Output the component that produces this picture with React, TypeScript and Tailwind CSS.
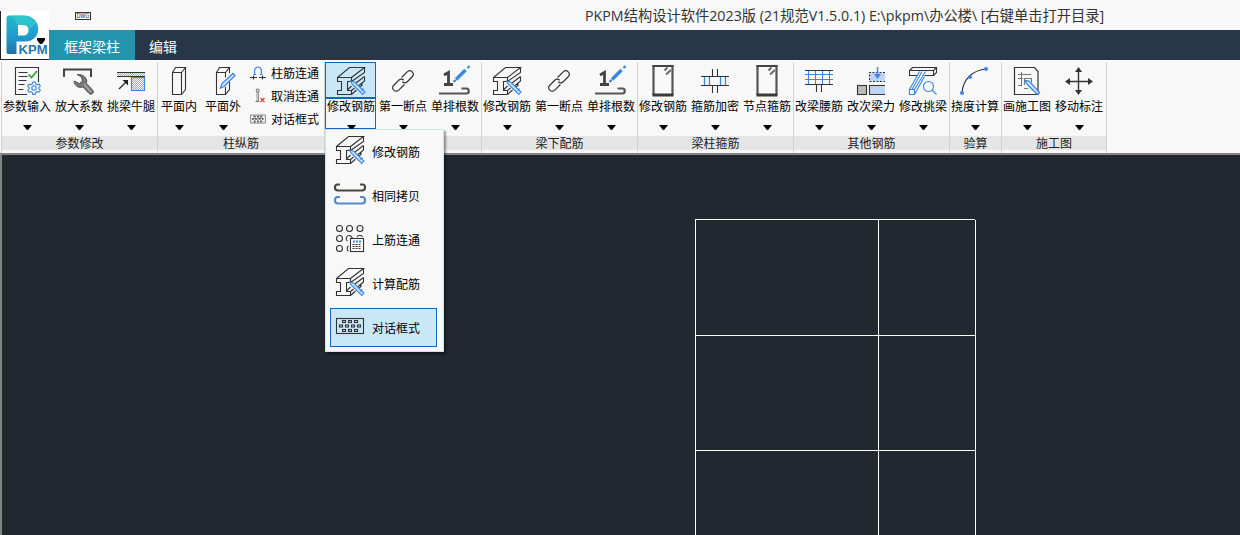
import React from "react";

type P = { className?: string };
type IconC = (p: P) => React.ReactElement;

const D = "#333";
const B = "#3a86e0";

const I = ({ children, className = "w-8 h-8", vb = "0 0 32 32" }: { children: React.ReactNode; className?: string; vb?: string }) => (
  <svg viewBox={vb} className={className + " shrink-0 block overflow-visible"} fill="none" stroke={D} strokeWidth="1.1">
    {children}
  </svg>
);

const ParamInput: IconC = () => (
  <I>
    <path d="M16 30.5H4.500V3.500h23V18M7.500 8.500h9M7.500 12.500h9M7.500 16.500h8M7.500 20.500h6M7.500 25.500h5" />
    <path d="M17.500 10.500l3 3 5.500-6.500" stroke="#2fa52f" strokeWidth="1.700" />
    <g stroke={B} transform="translate(1 0)">
      <circle cx="22" cy="24" r="2.200" />
      <path d="M20.800 18h2.400l.5 2 1.400.8 2-.6 1.200 2-1.500 1.500v1l1.500 1.500-1.200 2-2-.6-1.400.8-.5 2h-2.400l-.5-2-1.400-.8-2 .6-1.200-2 1.500-1.500v-1l-1.500-1.500 1.200-2 2 .6 1.400-.8z" />
    </g>
  </I>
);
const Wrench: IconC = () => (
  <I>
    <path d="M1 13V5.500h27V13" stroke="#444" strokeWidth="2" />
    <path d="M14 10.500l4.500 2.500 1 4-3 2.500-5.500-2.500c.5 5 5 7.500 9 6l6 6.500c2.500 2 5.500-.5 4-3l-6.500-7c1.500-5-3-9.500-9.500-9z" fill="#777" stroke="#555" strokeWidth="1" />
    <path d="M21 20l7 8" stroke="#aaa" strokeWidth="1.500" />
  </I>
);
const Corbel: IconC = () => (
  <I>
    <defs>
      <pattern id="hatch" width="2" height="2" patternUnits="userSpaceOnUse">
        <path d="M0 0h1v1H0zM1 1h1v1H1z" fill="#aaa" stroke="none" />
      </pattern>
    </defs>
    <rect x="2" y="8" width="28" height="4" fill="url(#hatch)" stroke="none" />
    <path d="M2 8.500h28M2 12.500h28" />
    <rect x="16.500" y="13.500" width="13" height="13" fill="url(#hatch)" stroke={B} />
    <path d="M4 25l8-8" strokeWidth="1.500" />
    <path d="M7.500 16H13v5.500z" fill="#222" stroke="none" />
  </I>
);
const InPlane: IconC = () => (
  <I>
    <path d="M9.500 8.500h9v22h-9zM9.500 8.500l3-5h10l-4 5M22.500 3.500v22l-4 5" />
  </I>
);
const OutPlane: IconC = () => (
  <I>
    <path d="M18.500 8.500v5M18.500 23v7.500h-9v-22h9M9.500 8.500l3-5h10l-4 5M22.500 3.500V9M22.500 18v7.500l-4 5" />
    <path d="M13.500 24l1.500-4.500L26 9.500l2 2L17 22.500z" stroke={B} fill="#d4e6fa" strokeWidth="1.300" />
  </I>
);
const BeamEdit: IconC = () => (
  <I>
    <path d="M2.500 13.500h14v4h-4v9h4v4h-14v-4h4v-9h-4zM2.500 13.500l12-10h15l-13 10M29.500 3.500v5l-13 9M29.500 12.500L21 19M29.500 12.500v4.500L23.500 22M12.500 26l4-4M16.500 26.500l3-2.500M16.500 30.500l5-4.500M27 18.500v3l-2 1.500" />
    <path d="M15.500 17l4 1L30 28l-2.200 2.500L17.500 20.500z" stroke={B} fill="#c5e0f8" />
    <path d="M26.500 26.500l2-2" stroke={B} />
  </I>
);
const ChainLink: IconC = () => (
  <I>
    <g transform="rotate(-45 16 17) translate(0 1.500)">
      <path d="M14.500 19H6.500a3.500 3.500 0 010-7h7a3.500 3.500 0 013.500 3.500M17.500 12h8a3.500 3.500 0 010 7h-7a3.500 3.500 0 01-3.500-3.500" strokeWidth="1.200" />
    </g>
  </I>
);
const RowCount: IconC = () => (
  <I>
    <path d="M0 29.500h27.500c3 0 3-5 0-5H22.500" stroke="#555" strokeWidth="2.200" />
    <path d="M5 11l4.500-2.500V20M5 20.500h9" stroke="#444" strokeWidth="2.800" />
    <path d="M17 15.500l9.500-9.500" stroke={B} strokeWidth="3.300" />
    <path d="M28.500 4l2-2M14.500 18l2-2" stroke={B} strokeWidth="2.300" />
  </I>
);
const Stirrup: IconC = () => (
  <I>
    <path d="M6.500 1v30M25.500 1v30" stroke="#555" strokeWidth="2.200" />
    <path d="M5.500 2h21" stroke="#444" strokeWidth="2" />
    <path d="M5.500 31h21" stroke="#3a3a3a" strokeWidth="3" />
    <path d="M17.500 6.500l3-3M19 10.500l5-4.500" stroke="#666" strokeWidth="1.800" />
  </I>
);
const StirrupDense: IconC = () => (
  <I>
    <path d="M2 12.500h28M2 21.500h28M13.500 5v7M18.500 5v7M13.500 22v7M18.500 22v7" />
    <path d="M5.500 13v8M10.500 13v8M21.500 13v8M26.500 13v8" stroke={B} strokeWidth="1.300" />
  </I>
);
const WaistBar: IconC = () => (
  <I>
    <path d="M2 10.500h28M2 15.500h28M5.500 6v14M12.500 6v14M19.500 6v14M26.500 6v14" stroke={B} />
    <path d="M2 6.500h28M2 20.500h28M13.500 21v7M18.500 21v7" />
  </I>
);
const SecondaryForce: IconC = () => (
  <I>
    <rect x="2.500" y="21.500" width="9" height="9" fill="#bbb" />
    <path d="M30 21.500H14.500v9H30" fill="#bfd4f2" />
    <path d="M30 8.500H14.500v9H30" fill="#bfd4f2" strokeDasharray="2 1.500" />
    <path d="M22.500 3v9" stroke={B} strokeWidth="1.500" />
    <path d="M19 10h7l-3.500 5z" fill={B} stroke="none" />
  </I>
);
const CantileverEdit: IconC = () => (
  <I>
    <path d="M2.500 6.500l3-3h24v5l-3 3h-9M2.500 6.500h24v5M26.500 6.500l3-3M2.500 6.500v5h8" />
    <path d="M12.500 7.500l-10 18h5l11-18M2.500 25.500v5h5v-5M7.500 30.500l10-18M5 25.500l10-18" stroke={B} />
    <circle cx="21.500" cy="22.500" r="5" stroke={B} />
    <path d="M25 26l4.500 4.500" stroke={B} />
  </I>
);
const Deflection: IconC = () => (
  <I>
    <path d="M3 29C4 14 15 6 27 5" />
    <g fill={B} stroke="none">
      <circle cx="3" cy="29" r="2" />
      <circle cx="11" cy="13" r="2" />
      <circle cx="27" cy="5" r="2" />
    </g>
  </I>
);
const DrawPlan: IconC = () => (
  <I>
    <path d="M3.500 3.500h20l3.500 4v23H3.500z" strokeWidth="1.200" />
    <path d="M7 10.500h13M7 14.500h5M10.500 8v14M7 21.500h4M13.500 14v7M13.500 14.500h7v4M13 24.500h4" stroke="#777" />
    <path d="M14 16.500l4 .5 10.500 11.500-2 2L16 20z" stroke={B} fill="#dcebfb" strokeWidth="1.300" />
  </I>
);
const MoveMark: IconC = () => (
  <I>
    <path d="M5 17.500h22M15.500 6v23" strokeWidth="1.400" />
    <path d="M15.500 3l3.500 5h-7zM15.500 31l3.500-5h-7zM2 17.500l5-3.500v7zM30 17.500L25 14v7z" fill={D} stroke="none" />
  </I>
);
const CopySame: IconC = () => (
  <I>
    <path d="M6 7.500H3.500c-3.500 0-3.500 6 .5 6h24c4 0 4-6 .5-6H26" stroke="#4a4545" strokeWidth="2.200" />
    <path d="M6 20H3.500c-3.500 0-3.500 6.500.5 6.500h24c4 0 4-6.500.5-6.500H26" stroke="#5289cf" strokeWidth="2.200" />
  </I>
);
const TopConnect: IconC = () => (
  <I>
    <g transform="translate(0 2)">
      {[5.500, 15.500, 26].map((x) => (
        <circle key={x} cx={x} cy="5.500" r="3" />
      ))}
      <circle cx="5.500" cy="15.500" r="3" />
      <circle cx="5.500" cy="25.500" r="3" />
      <path d="M13.500 18a3 3 0 114-.5M23 14a3 3 0 015.500 0M14.500 28a3 3 0 010-5" />
      <rect x="16.500" y="15.500" width="13" height="13" fill="#fff" />
      <path d="M19 18.500h8" stroke={B} strokeWidth="2" strokeDasharray="2 1" />
      <path d="M18.500 21.500h9M18.500 23.500h9M18.500 25.500h9" strokeDasharray="2 1" />
    </g>
  </I>
);
const Dialog = ({ className }: P) => (
  <I className={className} vb="0 0 30 20">
    <rect x="1.500" y="3.500" width="27" height="15" />
    {[[7, 13, 19], [4, 10, 16, 22], [7, 13, 19]].map((r, j) =>
      r.map((x) => <rect key={j + "-" + x} x={x + 0.5} y={5.500 + j * 4.500} width="3" height="2" />)
    )}
  </I>
);
const ColumnConnect: IconC = () => (
  <I className="w-4 h-4" vb="0 0 16 16">
    <path d="M5 9.500c-3-10 9-10 6 0M3.500 9.500H6M10 9.500h2.500" stroke={B} strokeWidth="1.200" />
    <path d="M0 12.500h7M9 12.500h7M3.500 10.500v4M12.500 10.500v4" />
  </I>
);
const CancelConnect: IconC = () => (
  <I className="w-4 h-4" vb="0 0 16 16">
    <path d="M7 3v10M8.500 3v10" stroke="#777" strokeWidth=".8" />
    <circle cx="7.700" cy="2.500" r="1.500" fill="#fff" stroke="#777" />
    <path d="M5.500 13.500h4" stroke="#777" />
    <path d="M10.500 10l4 4M14.500 10l-4 4" stroke="#d44" strokeWidth="1.400" />
  </I>
);

const Tri = () => (
  <svg viewBox="0 0 9 5" className="ml-px block h-[5px] w-[9px] shrink-0">
    <path d="M0 0h9L5 5H4z" fill="#000" />
  </svg>
);

const Tool = ({ icon: Ic, label, narrow, active }: { icon: IconC; label: string; narrow?: boolean; active?: boolean }) => (
  <div className={(narrow ? "w-11" : "w-[52px]") + " relative flex h-[67px] shrink-0 flex-col items-center pt-0.5"}>
    {active && (
      <div className="absolute inset-y-0 left-0 w-[51px] border border-[#1166bf] bg-[#f5f6f7]">
        <div className="h-9 border-b-2 border-[#1166bf] bg-[#cae7f8]" />
      </div>
    )}
    <div className="relative flex flex-col items-center">
      <Ic />
      <span className="mt-0.5 h-4 text-xs leading-4 whitespace-nowrap text-black">{label}</span>
      <div className="mt-[11px]">
        <Tri />
      </div>
    </div>
  </div>
);

const Group = ({ title, width, flush, children }: { title?: string; width: string; flush?: boolean; children: React.ReactNode }) => (
  <section className={width + " flex shrink-0 flex-col border-r border-[#d2d2d2]"}>
    <div className={"flex h-[74px] " + (flush ? "" : "-ml-px")}>{children}</div>
    <div className="flex h-[14px] items-center justify-center bg-[#e5e5e5] text-xs leading-[14px] text-[#222]">{title}</div>
  </section>
);

const SmallTool = ({ icon, label }: { icon: React.ReactNode; label: string }) => (
  <div className="flex h-[23px] items-center gap-[5px] text-xs text-black">
    {icon}
    <span className="whitespace-nowrap">{label}</span>
  </div>
);

const menu: { label: string; icon: React.ReactNode; on?: boolean }[] = [
  { label: "修改钢筋", icon: <BeamEdit /> },
  { label: "相同拷贝", icon: <CopySame /> },
  { label: "上筋连通", icon: <TopConnect /> },
  { label: "计算配筋", icon: <BeamEdit /> },
  { label: "对话框式", icon: <Dialog className="mx-px h-5 w-[30px]" />, on: true },
];

export default function App() {
  return (
    <div className="relative flex h-[535px] w-[1240px] flex-col overflow-hidden bg-[#212830] font-['Noto_Sans_CJK_SC',sans-serif]">
      <header className="flex h-[60px] shrink-0 bg-[#f8f8f8]">
        <div className="flex w-[49px] shrink-0 flex-col pt-[11px]">
          <div className="h-[49px] border-b border-l border-[#222] bg-white">
            <svg viewBox="0 0 48 48" className="block h-12 w-12">
              <defs>
                <linearGradient id="logo" x1="0" y1="0" x2="0" y2="1">
                  <stop offset="0" stopColor="#25b9c8" />
                  <stop offset="0.500" stopColor="#1e9fd0" />
                  <stop offset="1" stopColor="#2470a8" />
                </linearGradient>
              </defs>
              <path fillRule="evenodd" d="M5.500 7c0-1.500 1-2.500 2.500-2.500h14c20 0 20 26 2 26h-8.500V43h-8c-1.500 0-2-1-2-2zM17 14v10.500h6c6 0 6-10.500 0-10.500z" fill="url(#logo)" />
              <path d="M10 4.500h12c7 0 12 3 13.500 8L28 18c-1-3-3-4-5-4h-6z" fill="#35cfd2" opacity=".6" />
              <text x="17.500" y="43" fontFamily="Liberation Sans" fontWeight="bold" fontSize="13.500" textLength="29" lengthAdjust="spacingAndGlyphs" fill="#2878a8" stroke="#fff" strokeWidth="1.500" paintOrder="stroke">KPM</text>
              <path d="M36 27h8v2l-3 4h-2l-3-4z" fill="#000" />
            </svg>
          </div>
        </div>
        <div className="flex flex-1 flex-col">
          <div className="flex h-[30px]">
            <div className="pt-3 pl-[26px]">
              <svg viewBox="0 0 16 8" className="block h-2 w-4">
                <rect x=".5" y=".5" width="15" height="7" fill="#fff" stroke="#333" />
                <text x="1.500" y="6.300" fontFamily="Liberation Sans" fontSize="6.500" textLength="13" lengthAdjust="spacingAndGlyphs" fill="#222">DWG</text>
              </svg>
            </div>
            <div className="ml-[494px] pt-[5px] font-['Open_Sans','Noto_Sans_CJK_SC',sans-serif] text-[14.250px] leading-[22px] whitespace-pre text-[#333]">
              PKPM结构设计软件2023版 (21规范V1.5.0.1) E:\pkpm\办公楼\ [右键单击打开目录]
            </div>
          </div>
          <nav className="flex h-[30px] bg-[#273649] text-sm leading-[32px] text-white">
            <div className="w-[86px] bg-[#2493ae] text-center">框架梁柱</div>
            <div className="w-14 text-center">编辑</div>
          </nav>
        </div>
      </header>

      <div className="flex h-[95px] shrink-0 border-b-2 border-[#858585] bg-[#f8f8f8] pt-0.5">
        <div className="ml-px flex h-[91px] border-l border-[#d2d2d2]">
          <Group title="参数修改" width="w-[156px]">
            <Tool icon={ParamInput} label="参数输入" />
            <Tool icon={Wrench} label="放大系数" />
            <Tool icon={Corbel} label="挑梁牛腿" />
          </Group>
          <Group title="柱纵筋" width="w-[167px]">
            <Tool icon={InPlane} label="平面内" narrow />
            <Tool icon={OutPlane} label="平面外" narrow />
            <div className="-mt-px pl-[5px]">
              <SmallTool icon={<ColumnConnect />} label="柱筋连通" />
              <SmallTool icon={<CancelConnect />} label="取消连通" />
              <SmallTool icon={<Dialog className="h-[11px] w-4" />} label="对话框式" />
            </div>
          </Group>
          <Group width="w-[157px]" flush>
            <Tool icon={BeamEdit} label="修改钢筋" active />
            <Tool icon={ChainLink} label="第一断点" />
            <Tool icon={RowCount} label="单排根数" />
          </Group>
          <Group title="梁下配筋" width="w-[156px]">
            <Tool icon={BeamEdit} label="修改钢筋" />
            <Tool icon={ChainLink} label="第一断点" />
            <Tool icon={RowCount} label="单排根数" />
          </Group>
          <Group title="梁柱箍筋" width="w-[156px]">
            <Tool icon={Stirrup} label="修改钢筋" />
            <Tool icon={StirrupDense} label="箍筋加密" />
            <Tool icon={Stirrup} label="节点箍筋" />
          </Group>
          <Group title="其他钢筋" width="w-[156px]">
            <Tool icon={WaistBar} label="改梁腰筋" />
            <Tool icon={SecondaryForce} label="改次梁力" />
            <Tool icon={CantileverEdit} label="修改挑梁" />
          </Group>
          <Group title="验算" width="w-[52px]">
            <Tool icon={Deflection} label="挠度计算" />
          </Group>
          <Group title="施工图" width="w-[105px]">
            <Tool icon={DrawPlan} label="画施工图" />
            <Tool icon={MoveMark} label="移动标注" />
          </Group>
        </div>
      </div>

      <main className="h-[380px] border-l-2 border-[#858585]">
        <svg viewBox="2 155 1238 380" className="block h-[380px] w-[1238px]" fill="none" stroke="#fff" shapeRendering="crispEdges">
          <path d="M695.500 535V219.500H975M975.500 220V535M878.500 219V535M695 335.500H975M695 450.500H975" />
        </svg>
      </main>

      <div className="absolute top-[129px] left-[325px] h-[223px] w-[119px] border border-[#cfe4ea] bg-[#f8f8f8] px-1 pt-0.5 shadow-[2px_2px_2px_rgba(0,0,0,0.4)]">
        {menu.map((m, i) => (
          <div key={i} className="flex h-11 items-start">
            <div className={"flex h-[39px] w-[107px] items-center border pl-[3px] text-xs text-black " + (m.on ? "border-[#1166bf] bg-[#cae7f8]" : "border-transparent")}>
              <div className="-mt-[5px]">{m.icon}</div>
              <span className="ml-[6px] whitespace-nowrap">{m.label}</span>
            </div>
          </div>
        ))}
      </div>
    </div>
  );
}
